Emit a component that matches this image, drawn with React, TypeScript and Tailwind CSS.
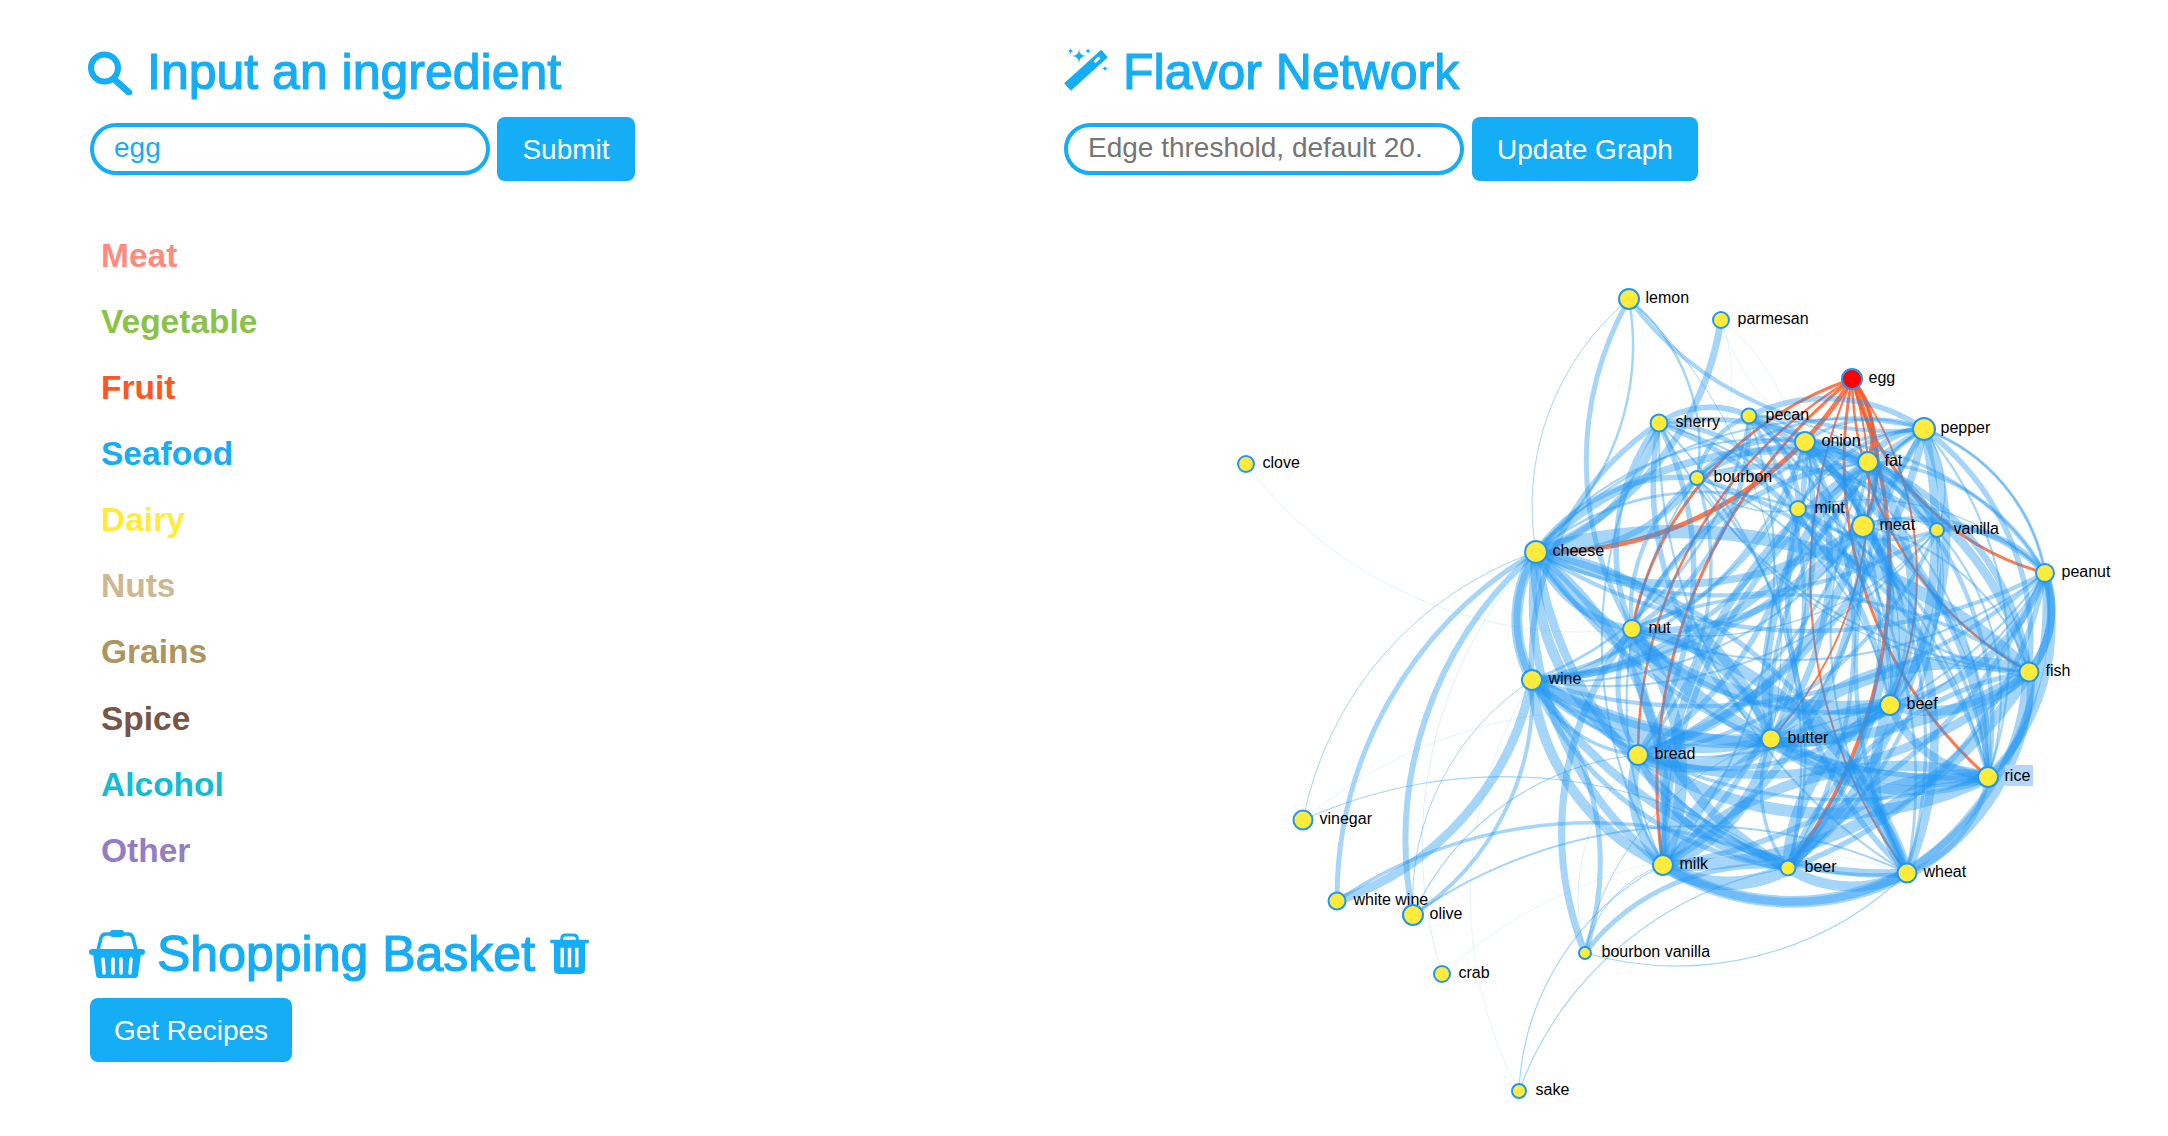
const nodes: Record<string, [number, number, number]> = {
  lemon: [1629, 298, 10],
  parmesan: [1721, 319, 8],
  egg: [1852, 378, 10],
  sherry: [1659, 422, 8.5],
  pecan: [1749, 415, 7.5],
  pepper: [1924, 428, 11],
  onion: [1805, 441, 10],
  fat: [1868, 461, 10],
  clove: [1246, 463, 8],
  bourbon: [1697, 477, 7],
  mint: [1798, 508, 8],
  meat: [1863, 525, 11],
  vanilla: [1937, 529, 7],
  cheese: [1536, 551, 11],
  peanut: [2045, 572, 9],
  nut: [1632, 628, 9],
  fish: [2029, 671, 9.5],
  wine: [1532, 679, 10],
  beef: [1890, 704, 10],
  butter: [1771, 738, 9.5],
  bread: [1638, 754, 10],
  rice: [1988, 776, 10],
  vinegar: [1303, 819, 9.5],
  milk: [1663, 864, 10],
  beer: [1788, 867, 7.5],
  wheat: [1907, 872, 9.5],
  'white wine': [1337, 900, 8.5],
  olive: [1413, 914, 10],
  'bourbon vanilla': [1585, 952, 6],
  crab: [1442, 973, 8],
  sake: [1519, 1090, 7],
}

// order matters: the arc bulges to the left of a -> b
const redEdges: [string, string, number][] = [
  ['egg', 'cheese', 5],
  ['nut', 'egg', 3],
  ['bread', 'egg', 2.5],
  ['milk', 'egg', 3],
  ['egg', 'butter', 2],
  ['egg', 'beer', 4],
  ['wheat', 'egg', 2],
  ['rice', 'egg', 3],
  ['peanut', 'egg', 3],
  ['egg', 'beef', 2],
  ['fish', 'egg', 2.5],
  ['egg', 'meat', 3],
  ['egg', 'fat', 4],
]

const outerEdges: [string, string, number][] = [
  ['cheese', 'lemon', 1],
  ['nut', 'lemon', 5],
  ['lemon', 'cheese', 2.5],
  ['lemon', 'bourbon', 2.5],
  ['lemon', 'butter', 1],
  ['pepper', 'lemon', 4],
  ['parmesan', 'cheese', 7],
  ['parmesan', 'bourbon', 0.6],
  ['parmesan', 'mint', 0.6],
  ['fat', 'parmesan', 0.6],
  ['nut', 'clove', 0.7],
  ['vinegar', 'cheese', 1],
  ['vinegar', 'beer', 1.2],
  ['vinegar', 'butter', 0.6],
  ['wine', 'white wine', 9],
  ['white wine', 'cheese', 5],
  ['white wine', 'beer', 3.5],
  ['olive', 'cheese', 6],
  ['wine', 'olive', 4],
  ['olive', 'wine', 1],
  ['olive', 'wheat', 2],
  ['olive', 'bread', 1.2],
  ['crab', 'cheese', 0.8],
  ['crab', 'wheat', 0.6],
  ['sake', 'wine', 0.6],
  ['sake', 'beer', 1.2],
  ['sake', 'milk', 1.2],
  ['bourbon vanilla', 'nut', 7],
  ['wine', 'bourbon vanilla', 5],
  ['bourbon vanilla', 'beer', 5],
  ['bourbon vanilla', 'milk', 1],
  ['wheat', 'bourbon vanilla', 1.2],
  ['bourbon vanilla', 'butter', 1],
  ['bourbon vanilla', 'bread', 0.8],
  ['wine', 'cheese', 11],
  ['milk', 'cheese', 8],
  ['wheat', 'milk', 8],
  ['peanut', 'fish', 8],
  ['pepper', 'peanut', 1.5],
  ['sherry', 'cheese', 7],
  ['bourbon', 'cheese', 6],
]

const heavy = ['cheese', 'wine', 'nut', 'bread', 'butter', 'beef', 'fish', 'rice', 'wheat', 'beer', 'milk']
const medium = ['meat', 'fat', 'onion', 'pepper', 'peanut']
const light = ['mint', 'vanilla', 'sherry', 'pecan', 'bourbon']

function coreEdges() {
  const names = [...heavy, ...medium, ...light]
  const out: [string, string, number][] = []
  names.forEach((a, i) => {
    names.forEach((b, j) => {
      if (j <= i) return
      const h = (i * 73 + j * 151 + i * j * 17) % 100
      const aLight = light.includes(a) || light.includes(b)
      if (aLight && h % 3 === 0) return
      const factor = aLight ? 0.7 : medium.includes(a) || medium.includes(b) ? 1.1 : 1.7
      const w = Math.max(1, (2 + (h % 7)) * factor)
      const [ax, ay] = nodes[a]
      const [bx, by] = nodes[b]
      const mx = (ax + bx) / 2 - 1770
      const my = (ay + by) / 2 - 680
      // left of a -> b on screen
      const inward = (by - ay) * mx - (bx - ax) * my < 0
      const far = Math.hypot(mx, my) > 190
      const flip = far ? inward : h % 2 === 0
      // rim edges bend back in, so the outline stays open
      out.push(flip !== far ? [a, b, w] : [b, a, w])
    })
  })
  return out
}

function arc(a: string, b: string) {
  const [ax, ay] = nodes[a]
  const [bx, by] = nodes[b]
  const r = Math.hypot(bx - ax, by - ay)
  return `M${ax},${ay} A${r},${r} 0 0,1 ${bx},${by}`
}

function sparkle(x: number, y: number, r: number) {
  return `M${x} ${y - r}Q${x} ${y} ${x + r} ${y}Q${x} ${y} ${x} ${y + r}Q${x} ${y} ${x - r} ${y}Q${x} ${y} ${x} ${y - r}Z`
}

function SearchIcon() {
  return (
    <svg viewBox="0 0 45 45" className="w-[45px] h-[45px] shrink-0 text-[#16adf7]" fill="none" stroke="currentColor">
      <circle cx="16.500" cy="18" r="13.500" strokeWidth="6" />
      <path d="M27 30L41 42.500" strokeWidth="6.500" strokeLinecap="round" />
    </svg>
  )
}

function WandIcon() {
  return (
    <svg viewBox="8 8 48 48" className="w-[48px] h-[48px] shrink-0 text-[#16adf7]" fill="currentColor">
      <path d="M12.500 47L49.500 13.500" stroke="currentColor" strokeWidth="10" strokeLinejoin="round" />
      <path d="M39.500 22L44.500 17.500" stroke="#fff" strokeWidth="3" />
      <path d={sparkle(24, 16, 7.500)} />
      <path d={sparkle(15.500, 11, 3.500)} />
      <path d={sparkle(33, 11, 3.500)} />
      <path d={sparkle(50, 28.500, 3.500)} />
    </svg>
  )
}

function BasketIcon() {
  return (
    <svg viewBox="0 0 56 48" className="w-[56px] h-[48px] shrink-0 text-[#16adf7]" fill="currentColor">
      <path d="M9 20L12 8Q13 4 17 4H39Q43 4 44 8L47 20" fill="none" stroke="currentColor" strokeWidth="3.500" />
      <rect x="21" y="0" width="14" height="7" rx="2.500" />
      <rect x="0" y="19" width="56" height="6" rx="3" />
      <path d="M4 24H52L49 45Q48.600 48 46 48H10Q7.400 48 7 45Z" />
      <path d="M14 29L15 43M24 29V43M32 29V43M42 29L41 43" stroke="#fff" strokeWidth="3.500" strokeLinecap="round" />
    </svg>
  )
}

function TrashIcon() {
  return (
    <svg viewBox="0 0 40 42" className="w-[39px] h-[41px] shrink-0 text-[#16adf7]" fill="currentColor">
      <path d="M12 8V6Q12 2 16 2H24Q28 2 28 6V8" fill="none" stroke="currentColor" strokeWidth="3" />
      <rect x="0" y="7" width="40" height="3.500" rx="1.500" />
      <path d="M4 10H36V37Q36 42 31 42H9Q4 42 4 37Z" />
      <path d="M12.500 15V35M20 15V35M27.500 15V35" stroke="#fff" strokeWidth="3.500" />
    </svg>
  )
}

function Graph() {
  return (
    <svg viewBox="1064 190 1104 946" className="w-[1104px] h-[946px] block" fill="none">
      {redEdges.map(([a, b, w]) => (
        <path key={a + b} d={arc(a, b)} stroke="#ff5722" strokeOpacity={0.8} strokeWidth={w} />
      ))}
      {[...coreEdges(), ...outerEdges].map(([a, b, w], i) => (
        <path key={i} d={arc(a, b)} stroke="#2196f3" strokeOpacity={w < 1 ? 0.2 : 0.4} strokeWidth={w} />
      ))}
      <rect x="2005" y="764" width="28" height="21" fill="#b4d5fc" />
      {Object.entries(nodes).map(([name, [x, y, r]]) => (
        <g key={name}>
          <circle cx={x} cy={y} r={r} fill={name === 'egg' ? '#ff0000' : '#ffeb3b'} stroke="#2196f3" strokeWidth="2" />
          <text x={x + 16.500} y={y + 4} fontSize="16" fill="#000" fontFamily="'Liberation Sans', Arial, sans-serif">
            {name}
          </text>
        </g>
      ))}
    </svg>
  )
}

const categories = [
  { name: 'Meat', color: 'text-[#ff8a80]' },
  { name: 'Vegetable', color: 'text-[#8bc34a]' },
  { name: 'Fruit', color: 'text-[#ff5722]' },
  { name: 'Seafood', color: 'text-[#16adf7]' },
  { name: 'Dairy', color: 'text-[#ffeb3b]' },
  { name: 'Nuts', color: 'text-[#cdb892]' },
  { name: 'Grains', color: 'text-[#ad9560]' },
  { name: 'Spice', color: 'text-[#795548]' },
  { name: 'Alcohol', color: 'text-[#12bcd4]' },
  { name: 'Other', color: 'text-[#957dc4]' },
]

const headingClass = 'text-[50px] leading-[60px] text-[#16adf7] [-webkit-text-stroke-width:1.2px]'
const buttonClass = 'h-16 rounded-lg bg-[#16adf7] text-[28px] text-white pt-[2px]'
const inputClass =
  'h-[52px] w-[400px] rounded-full border-4 border-[#16adf7] bg-white px-[20px] pb-[2px] text-[28px] outline-none placeholder:text-[#757575]'

export default function App() {
  return (
    <div className="h-screen overflow-hidden bg-white flex font-['Liberation_Sans',Arial,sans-serif]">
      <div className="w-[1064px] pl-[90px] pt-[42px] shrink-0">
        <div className="flex items-center gap-[14px] -ml-[2px]">
          <SearchIcon />
          <h1 className={headingClass}>Input an ingredient</h1>
        </div>
        <form className="flex items-center gap-[7px] mt-[15px]">
          <input className={`${inputClass} text-[#16adf7]`} defaultValue="egg" />
          <button type="button" className={`${buttonClass} w-[138px]`}>
            Submit
          </button>
        </form>
        <ul className="mt-[42px] pl-[11px]">
          {categories.map(c => (
            <li key={c.name} className={`h-[66.1px] flex items-center text-[33.5px] font-bold ${c.color}`}>
              {c.name}
            </li>
          ))}
        </ul>
        <div className="flex items-center mt-[40px] -ml-[1px]">
          <BasketIcon />
          <h2 className={`${headingClass} ml-[12px]`}>Shopping Basket</h2>
          <span className="ml-[15px]">
            <TrashIcon />
          </span>
        </div>
        <button type="button" className={`${buttonClass} mt-[14px] w-[202px] block`}>
          Get Recipes
        </button>
      </div>
      <div className="flex-1 pt-[42px]">
        <div className="flex items-center gap-[12px] -ml-px">
          <WandIcon />
          <h1 className={headingClass}>Flavor Network</h1>
        </div>
        <form className="flex items-center gap-[8px] mt-[15px]">
          <input className={inputClass} placeholder="Edge threshold, default 20." />
          <button type="button" className={`${buttonClass} w-[226px]`}>
            Update Graph
          </button>
        </form>
        <div className="mt-[10px]">
          <Graph />
        </div>
      </div>
    </div>
  )
}
